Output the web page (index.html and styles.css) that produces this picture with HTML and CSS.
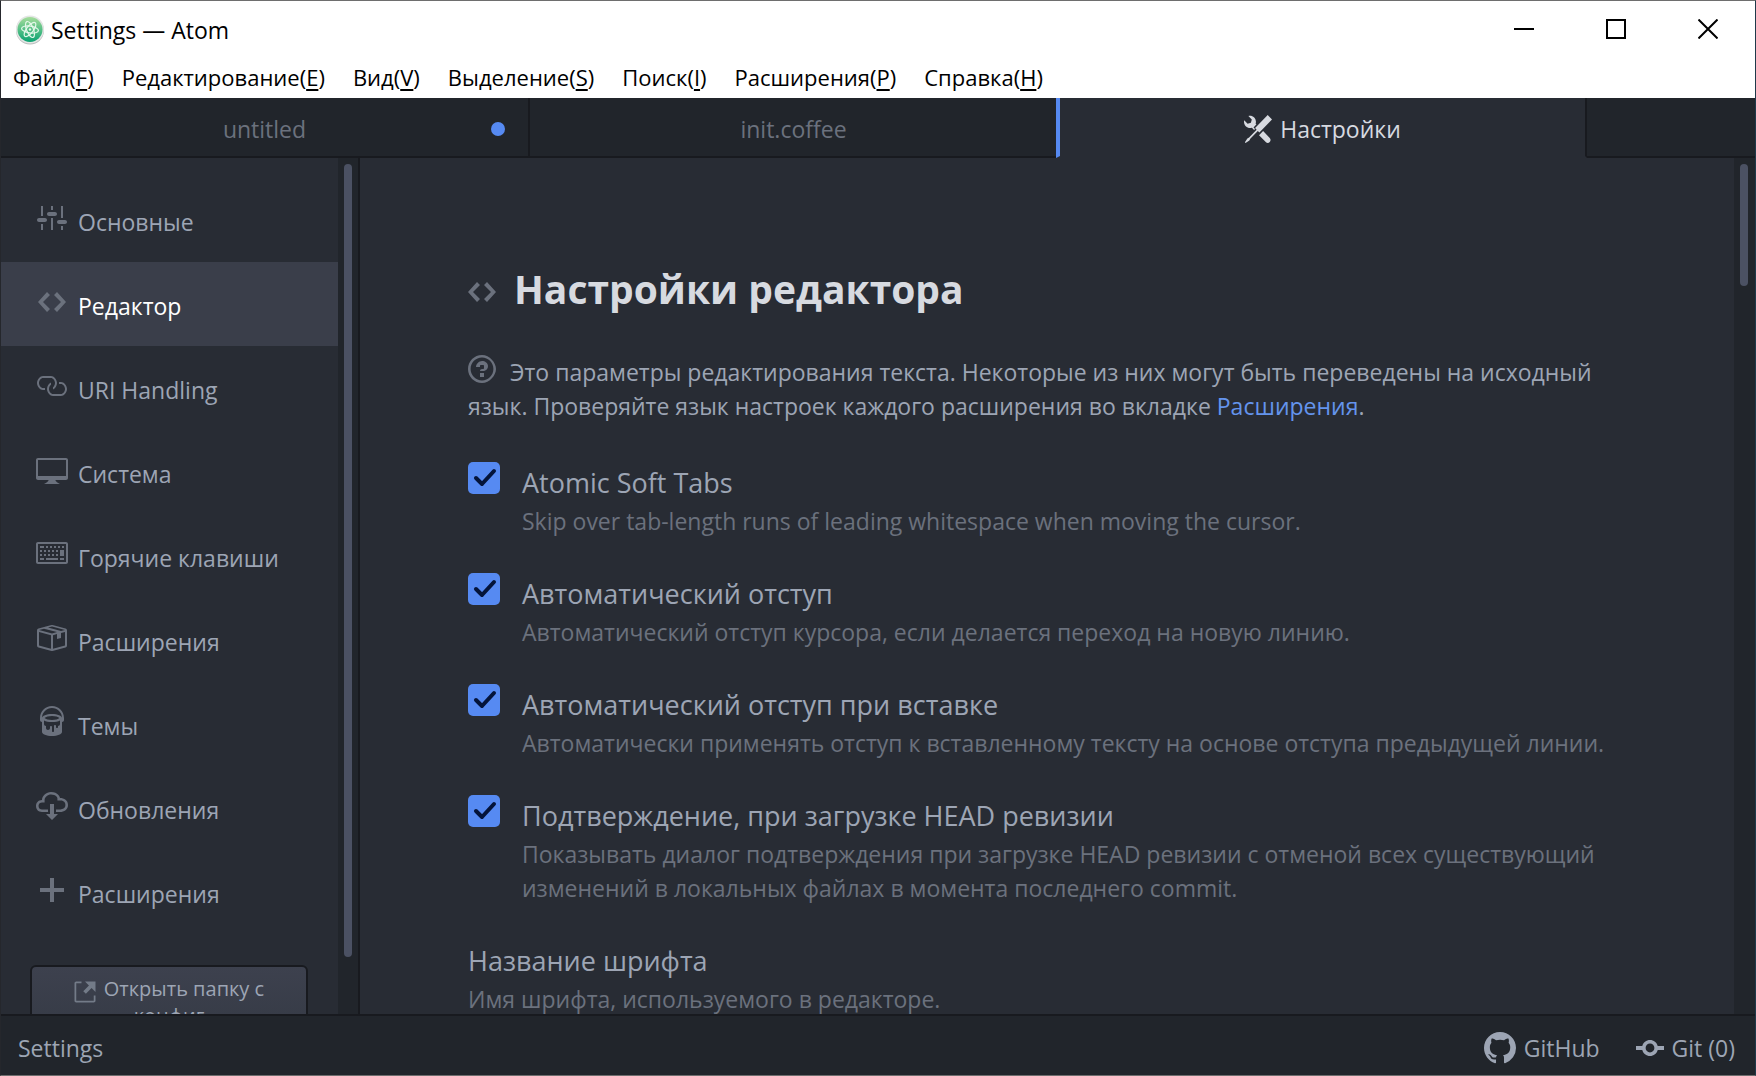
FILE: index.html
```html
<!DOCTYPE html>
<html lang="ru">
<head>
<meta charset="utf-8">
<title>Settings — Atom</title>
<meta name="viewport" content="width=device-width, initial-scale=1">
<link rel="stylesheet" href="styles.css">
</head>
<body>
<div class="window">
  <header class="titlebar">
    <svg class="app-icon" viewBox="0 0 28 30" aria-hidden="true">
      <defs>
        <linearGradient id="atom-green" x1="0" y1="0" x2="0" y2="1">
          <stop offset="0" stop-color="#a5dd9b"/>
          <stop offset="1" stop-color="#0aa372"/>
        </linearGradient>
      </defs>
      <circle cx="14" cy="15.500" r="14" fill="#b9bcbc"/>
      <circle cx="14" cy="14.500" r="14" fill="#e3e6e4"/>
      <circle cx="14" cy="14.500" r="12.500" fill="url(#atom-green)"/>
      <g fill="none" stroke="#e4f8ea" stroke-width="1.200">
        <ellipse cx="14" cy="14.500" rx="8.500" ry="3.400" transform="rotate(8 14 14.500)"/>
        <ellipse cx="14" cy="14.500" rx="8.500" ry="3.400" transform="rotate(68 14 14.500)"/>
        <ellipse cx="14" cy="14.500" rx="8.500" ry="3.400" transform="rotate(128 14 14.500)"/>
      </g>
      <circle cx="14" cy="14.500" r="1.200" fill="#e4f8ea"/>
    </svg>
    <span class="title">Settings — Atom</span>
    <div class="window-controls">
      <button type="button" aria-label="Свернуть"><svg viewBox="0 0 20 20"><path d="M0 10h20" /></svg></button>
      <button type="button" aria-label="Развернуть"><svg viewBox="0 0 20 20"><path d="M1 1h18v18H1z"/></svg></button>
      <button type="button" aria-label="Закрыть"><svg viewBox="0 0 20 20"><path d="M.5.5l19 19M19.500.5l-19 19"/></svg></button>
    </div>
  </header>
  <nav class="menubar">
    <button type="button">Файл(<u>F</u>)</button>
    <button type="button">Редактирование(<u>E</u>)</button>
    <button type="button">Вид(<u>V</u>)</button>
    <button type="button">Выделение(<u>S</u>)</button>
    <button type="button">Поиск(<u>I</u>)</button>
    <button type="button">Расширения(<u>P</u>)</button>
    <button type="button">Справка(<u>H</u>)</button>
  </nav>
  <div class="tabs">
    <button type="button" class="tab">untitled<span class="modified"></span></button>
    <button type="button" class="tab">init.coffee</button>
    <button type="button" class="tab active">
      <svg class="tab-icon" viewBox="0 0 16 16"><path d="M4.480 7.270c.26.26 1.280 1.330 1.280 1.330l.56-.58-.88-.91 1.690-1.800s-.76-.74-.43-.45c.32-1.190.03-2.510-.87-3.440C4.930.5 3.660.2 2.520.51l1.930 2-.51 1.960-1.890.52-1.930-1.990C-.19 4.170.1 5.480 1 6.400c.94.98 2.290 1.260 3.480.87zm6.440 1.940l-2.330 2.300 3.840 3.980c.31.33.73.49 1.140.49.41 0 .82-.16 1.140-.49.63-.65.63-1.700 0-2.350l-3.790-3.930zM16 2.530L13.550 0 6.330 7.460l.88.91-4.310 4.460-.99.53-1.390 2.270.35.37 2.200-1.440.51-1.020L7.900 9.080l.88.91L16 2.530z"/></svg>
      Настройки
    </button>
    <div class="tabs-rest"></div>
  </div>
  <div class="workspace">
    <aside class="sidebar">
      <nav class="sections">
        <a href="#core"><svg viewBox="0.5 0 16 16"><path d="M4 7H3V2h1v5zm-1 7h1v-3H3v3zm5 0h1V8H8v6zm5 0h1v-2h-1v2zm1-12h-1v6h1V2zM9 2H8v2h1V2zM5 8H2c-.55 0-1 .45-1 1s.45 1 1 1h3c.55 0 1-.45 1-1s-.45-1-1-1zm5-3H7c-.55 0-1 .45-1 1s.45 1 1 1h3c.55 0 1-.45 1-1s-.45-1-1-1zm5 4h-3c-.55 0-1 .45-1 1s.45 1 1 1h3c.55 0 1-.45 1-1s-.45-1-1-1z"/></svg>Основные</a>
        <a href="#editor" class="current"><svg viewBox="-1 0 16 16"><path d="M9.500 3L8 4.500 11.500 8 8 11.500 9.500 13 14 8 9.500 3zm-5 0L0 8l4.500 5L6 11.500 2.500 8 6 4.500 4.500 3z"/></svg>Редактор</a>
        <a href="#uri"><svg viewBox="0.5 0 16 16"><path d="M4 9h1v1H4c-1.500 0-3-1.690-3-3.500S2.550 3 4 3h4c1.450 0 3 1.690 3 3.500 0 1.410-.91 2.720-2 3.250V8.590c.58-.45 1-1.270 1-2.090C10 5.220 8.980 4 8 4H4c-.98 0-2 1.220-2 2.500S3 9 4 9zm9-3h-1v1h1c1 0 2 1.220 2 2.500S13.980 12 13 12H9c-.98 0-2-1.220-2-2.500 0-.83.42-1.640 1-2.090V6.250c-1.090.53-2 1.840-2 3.250C6 11.310 7.550 13 9 13h4c1.450 0 3-1.690 3-3.500S14.500 6 13 6z"/></svg>URI Handling</a>
        <a href="#system"><svg viewBox="0 0 16 16"><path d="M15 2H1c-.55 0-1 .45-1 1v9c0 .55.45 1 1 1h5.340c-.25.61-.86 1.390-2.340 2h8c-1.480-.61-2.090-1.390-2.340-2H15c.55 0 1-.45 1-1V3c0-.55-.45-1-1-1zm0 9H1V3h14v8z"/></svg>Система</a>
        <a href="#keys"><svg viewBox="0 0 16 16"><path d="M10 5H9V4h1v1zM3 6H2v1h1V6zm5-2H7v1h1V4zM4 4H2v1h2V4zm8 7h2v-1h-2v1zM8 7h1V6H8v1zm-4 3H2v1h2v-1zm8-6h-1v1h1V4zm2 0h-1v1h1V4zm-2 5h2V6h-2v3zm4-6v9c0 .55-.45 1-1 1H1c-.55 0-1-.45-1-1V3c0-.55.45-1 1-1h14c.55 0 1 .45 1 1zm-1 0H1v9h14V3zM6 7h1V6H6v1zm0-3H5v1h1V4zM4 7h1V6H4v1zm1 4h6v-1H5v1zm5-4h1V6h-1v1zM3 8H2v1h1V8zm5 0v1h1V8H8zM6 8v1h1V8H6zM5 8H4v1h1V8zm5 1h1V8h-1v1z"/></svg>Горячие клавиши</a>
        <a href="#packages"><svg viewBox="0.5 0 16 16"><path d="M1 4.270v7.470c0 .45.3.84.75.97l6.500 1.730c.16.05.34.05.5 0l6.500-1.730c.45-.13.75-.52.75-.97V4.270c0-.45-.3-.84-.75-.97l-6.500-1.740a1.400 1.400 0 0 0-.5 0L1.750 3.300c-.45.13-.75.52-.75.97zm7 9.090l-6-1.590V5l6 1.610v6.750zM2 4l2.500-.67L11 5.060l-2.500.67L2 4zm13 7.770l-6 1.590V6.610l2-.55V8.500l2-.53V5.530L15 5v6.770zm-2-7.240L6.500 2.800l2-.53L15 4l-2 .53z"/></svg>Расширения</a>
        <a href="#themes"><svg viewBox="-2 0 16 16"><path d="M6 0C2.690 0 0 2.690 0 6v1c0 .55.45 1 1 1v5c0 1.100 2.240 2 5 2s5-.9 5-2V8c.55 0 1-.45 1-1V6c0-3.310-2.690-6-6-6zm3 10v.5c0 .28-.22.5-.5.5s-.5-.22-.5-.5V10c0-.28-.22-.5-.5-.5s-.5.22-.5.5v2.500c0 .28-.22.5-.5.5s-.5-.22-.5-.5v-2c0-.28-.22-.5-.5-.5s-.5.22-.5.5v.5c0 .55-.45 1-1 1s-1-.45-1-1v-1c-.55 0-1-.45-1-1V7.200c.91.49 2.360.8 4 .8 1.640 0 3.090-.31 4-.8V9c0 .55-.45 1-1 1zM6 7c-1.680 0-3.120-.41-3.710-1C2.880 5.410 4.320 5 6 5c1.680 0 3.120.41 3.710 1-.59.59-2.030 1-3.710 1zm0-3c-2.760 0-5 .89-5 2 0-2.760 2.240-5 5-5s5 2.240 5 5c0-1.100-2.240-2-5-2z"/></svg>Темы</a>
        <a href="#updates"><svg viewBox="0 0 16 16"><path d="M9 12h2l-3 3-3-3h2V7h2v5zm3-8c0-.44-.91-3-4.500-3C5.080 1 3 2.920 3 5 1.020 5 0 6.520 0 8c0 1.530 1 3 3 3h3V9.700H3C1.380 9.700 1.300 8.280 1.300 8c0-.17.05-1.700 1.700-1.700h1.300V5c0-1.390 1.560-2.700 3.200-2.700 2.550 0 3.130 1.550 3.200 1.800v1.200H12c.81 0 2.700.22 2.700 2.200 0 2.090-2.250 2.200-2.700 2.200h-2V11h2c2.080 0 4-1.160 4-3.500C16 5.060 14.080 4 12 4z"/></svg>Обновления</a>
        <a href="#install"><svg viewBox="-2 0 16 16"><path d="M12 9H7v5H5V9H0V7h5V2h2v5h5v2z"/></svg>Расширения</a>
      </nav>
      <button type="button" class="open-config"><svg viewBox="0 0 12 16"><path d="M11 10h1v3c0 .55-.45 1-1 1H1c-.55 0-1-.45-1-1V3c0-.55.45-1 1-1h3v1H1v10h10v-3zM6 2l2.250 2.250L5 7.500 6.500 9l3.250-3.250L12 8V2H6z"/></svg>Открыть папку с конфиг</button>
    </aside>
    <div class="scrollbar side"><div class="thumb long"></div></div>
    <main class="panel">
      <h1><svg viewBox="0 0 14 16"><path d="M9.500 3L8 4.500 11.500 8 8 11.500 9.500 13 14 8 9.500 3zm-5 0L0 8l4.500 5L6 11.500 2.500 8 6 4.500 4.500 3z"/></svg>Настройки редактора</h1>
      <p class="intro"><svg viewBox="0 0 14 16"><path d="M6 10h2v2H6v-2zm4-3.500C10 8.640 8 9 8 9H6c0-.55.45-1 1-1h.5c.28 0 .5-.22.5-.5v-1c0-.28-.22-.5-.5-.5h-1c-.28 0-.5.22-.5.5V7H4c0-1.500 1.500-3 3-3s3 1 3 2.500zM7 2.300c3.140 0 5.700 2.560 5.700 5.700s-2.560 5.700-5.700 5.700A5.710 5.710 0 0 1 1.300 8c0-3.140 2.560-5.700 5.700-5.700zM7 1C3.140 1 0 4.140 0 8s3.140 7 7 7 7-3.860 7-7-3.140-7-7-7z"/></svg>Это параметры редактирования текста. Некоторые из них могут быть переведены на исходный язык. Проверяйте язык настроек каждого расширения во вкладке <a href="#packages">Расширения</a>.</p>
      <div class="setting">
        <span class="check"><input type="checkbox" id="soft-tabs" checked><svg viewBox="0 0 32 32"><path d="M8 16l6 6L26 9"/></svg></span>
        <div><label for="soft-tabs">Atomic Soft Tabs</label><p>Skip over tab-length runs of leading whitespace when moving the cursor.</p></div>
      </div>
      <div class="setting">
        <span class="check"><input type="checkbox" id="auto-indent" checked><svg viewBox="0 0 32 32"><path d="M8 16l6 6L26 9"/></svg></span>
        <div><label for="auto-indent">Автоматический отступ</label><p>Автоматический отступ курсора, если делается переход на новую линию.</p></div>
      </div>
      <div class="setting">
        <span class="check"><input type="checkbox" id="paste-indent" checked><svg viewBox="0 0 32 32"><path d="M8 16l6 6L26 9"/></svg></span>
        <div><label for="paste-indent">Автоматический отступ при вставке</label><p>Автоматически применять отступ к вставленному тексту на основе отступа предыдущей линии.</p></div>
      </div>
      <div class="setting">
        <span class="check"><input type="checkbox" id="confirm-head" checked><svg viewBox="0 0 32 32"><path d="M8 16l6 6L26 9"/></svg></span>
        <div><label for="confirm-head">Подтверждение, при загрузке HEAD ревизии</label><p>Показывать диалог подтверждения при загрузке HEAD ревизии с отменой всех существующий изменений в локальных файлах в момента последнего commit.</p></div>
      </div>
      <div class="setting">
        <div><label for="font-family">Название шрифта</label><p>Имя шрифта, используемого в редакторе.</p><input type="text" id="font-family" class="text-field"></div>
      </div>
    </main>
    <div class="scrollbar"><div class="thumb short"></div></div>
  </div>
  <footer class="statusbar">
    <span>Settings</span>
    <div class="status-right">
      <button type="button"><svg class="github" viewBox="0 0 16 16"><path d="M8 0C3.580 0 0 3.580 0 8c0 3.540 2.290 6.530 5.470 7.590.4.07.55-.17.55-.38 0-.19-.01-.82-.01-1.490-2.010.37-2.530-.49-2.690-.94-.09-.23-.48-.94-.82-1.130-.28-.15-.68-.52-.01-.53.63-.01 1.080.58 1.230.82.72 1.210 1.870.87 2.330.66.07-.52.28-.87.51-1.070-1.780-.2-3.640-.89-3.640-3.950 0-.87.31-1.590.82-2.150-.08-.2-.36-1.020.08-2.120 0 0 .67-.21 2.200.82.64-.18 1.320-.27 2-.27.68 0 1.360.09 2 .27 1.530-1.040 2.200-.82 2.200-.82.44 1.100.16 1.920.08 2.120.51.56.82 1.270.82 2.150 0 3.070-1.870 3.750-3.650 3.950.29.25.54.73.54 1.480 0 1.070-.01 1.930-.01 2.200 0 .21.15.46.55.38A8.013 8.013 0 0 0 16 8c0-4.420-3.580-8-8-8z"/></svg>GitHub</button>
      <button type="button"><svg class="commit" viewBox="0 0 14 16"><path d="M10.860 7c-.45-1.720-2-3-3.860-3-1.860 0-3.410 1.280-3.860 3H0v2h3.140c.45 1.720 2 3 3.860 3 1.860 0 3.410-1.280 3.860-3H14V7h-3.140zM7 10.200c-1.220 0-2.200-.98-2.200-2.200 0-1.220.98-2.200 2.200-2.200 1.220 0 2.200.98 2.200 2.200 0 1.220-.98 2.200-2.200 2.200z"/></svg>Git (0)</button>
    </div>
  </footer>
</div>
</body>
</html>
```

FILE: styles.css
```css
:root {
  --base: #282c34;
  --dark: #21252b;
  --line: #181a1f;
  --text: #9da5b4;
  --subtle: #6b717d;
  --bright: #d7dae0;
  --accent: #568af2;
}

* {
  box-sizing: border-box;
}

body {
  margin: 0;
  font-family: "Open Sans", "Noto Sans", sans-serif;
  font-size: 23px;
  color: var(--text);
  background: var(--dark);
}

button {
  margin: 0;
  padding: 0;
  border: 0;
  background: none;
  color: inherit;
  font: inherit;
}

svg {
  display: block;
  flex: none;
  fill: currentColor;
}

.window {
  display: flex;
  flex-direction: column;
  height: 100vh;
  border: 1px solid #6e6e6e;
  border-right-color: #1f3a4a;
  border-left-color: #25272c;
  overflow: hidden;
}

.titlebar {
  display: flex;
  align-items: center;
  height: 57px;
  padding: 0 1px 0 15px;
  background: #fff;
  color: #000;
}

.app-icon {
  width: 28px;
  height: 30px;
}

.title {
  flex: 1;
  padding-left: 7px;
}

.window-controls {
  display: flex;
  align-self: flex-start;
}

.window-controls button {
  display: grid;
  place-items: center;
  width: 92px;
  height: 56px;
}

.window-controls svg {
  width: 20px;
  height: 20px;
  fill: none;
  stroke: #000;
  stroke-width: 2;
}

.menubar {
  display: flex;
  gap: 28px;
  height: 40px;
  padding: 0 12px 2px;
  background: #fff;
  color: #000;
  font-size: 22px;
}

.menubar u {
  text-underline-offset: 3px;
}

.tabs {
  display: flex;
  flex: none;
  height: 60px;
  background: var(--dark);
}

.tab {
  position: relative;
  display: flex;
  flex: 0 1 529px;
  align-items: center;
  justify-content: center;
  gap: 8px;
  padding-top: 4px;
  border-right: 2px solid var(--line);
  border-bottom: 2px solid var(--line);
  color: var(--subtle);
}

.tab.active {
  flex-basis: 531px;
  margin-left: -3px;
  border-bottom-color: var(--base);
  border-left: 4px solid var(--accent);
  background: var(--base);
  color: var(--bright);
}

.tab-icon {
  width: 28px;
  height: 28px;
}

.modified {
  position: absolute;
  right: 23px;
  width: 14px;
  height: 14px;
  border-radius: 50%;
  background: var(--accent);
}

.tabs-rest {
  flex: 1;
  border-bottom: 2px solid var(--line);
}

.workspace {
  display: flex;
  flex: 1;
  min-height: 0;
  background: var(--base);
}

.sidebar {
  display: flex;
  flex: none;
  flex-direction: column;
  gap: 31px;
  width: 337px;
  padding-top: 20px;
  overflow: hidden;
}

.sections a {
  display: flex;
  align-items: center;
  gap: 10px;
  height: 84px;
  padding: 4px 0 0 35px;
  color: var(--text);
  text-decoration: none;
}

.sections svg {
  width: 32px;
  height: 32px;
  margin-bottom: 8px;
  color: var(--subtle);
}

.sections .current {
  background: #3a3e4a;
  color: #fff;
}

.open-config {
  flex: none;
  margin: 0 30px 0 29px;
  padding: 8px 32px;
  border: 2px solid var(--line);
  border-radius: 6px;
  background: linear-gradient(#3d414e, #353a45);
  font-size: 20px;
  line-height: 27px;
}

.open-config svg {
  display: inline-block;
  width: 22px;
  height: 28px;
  margin: -5px 8px -5px 0;
  vertical-align: -5px;
  color: #737b88;
}

.scrollbar {
  flex: none;
  width: 21px;
  padding: 6px;
  background: var(--dark);
}

.scrollbar.side {
  width: 22px;
  border-right: 2px solid var(--line);
}

.thumb {
  width: 8px;
  border-radius: 4px;
  background: #4b5163;
}

.thumb.long {
  height: 94%;
}

.thumb.short {
  height: 122px;
}

.panel {
  flex: 1;
  min-width: 0;
  padding: 101px 108px 0;
  overflow: hidden;
}

.panel h1 {
  display: flex;
  align-items: center;
  gap: 18px;
  margin: 0 0 36px;
  color: var(--bright);
  font-size: 39px;
  line-height: 60px;
}

.panel h1 svg {
  width: 28px;
  height: 32px;
  margin-top: 6px;
  color: var(--subtle);
}

.intro {
  margin: 0 0 39px;
  line-height: 34px;
}

.intro svg {
  display: inline-block;
  width: 28px;
  height: 32px;
  margin: -4px 14px 0 0;
  vertical-align: -4px;
  color: var(--subtle);
}

.intro a {
  color: #6494ed;
  text-decoration: none;
}

.setting {
  display: flex;
  gap: 22px;
  margin-bottom: 35px;
}

.setting label {
  display: block;
  font-size: 27px;
  line-height: 42px;
}

.setting p {
  margin: 0;
  color: var(--subtle);
  line-height: 34px;
}

.check {
  display: grid;
  flex: none;
  width: 32px;
  height: 32px;
}

.check input,
.check svg {
  grid-area: 1 / 1;
  width: 32px;
  height: 32px;
  margin: 0;
}

.check input {
  appearance: none;
  border-radius: 5px;
  background: var(--accent);
}

.check svg {
  fill: none;
  stroke: #04143a;
  stroke-width: 4;
  stroke-linecap: round;
  stroke-linejoin: round;
  pointer-events: none;
}

.text-field {
  width: 100%;
  height: 56px;
  margin-top: 16px;
  border: 2px solid var(--line);
  border-radius: 6px;
  background: #1b1d23;
  color: var(--bright);
  font: inherit;
}

.statusbar {
  display: flex;
  flex: none;
  align-items: center;
  justify-content: space-between;
  height: 61px;
  padding: 4px 20px 0 17px;
  border-top: 2px solid var(--line);
  background: var(--dark);
}

.status-right,
.status-right button {
  display: flex;
  align-items: center;
}

.status-right {
  gap: 36px;
}

.status-right button {
  gap: 8px;
}

.github {
  width: 32px;
  height: 32px;
}

.commit {
  width: 28px;
  height: 32px;
}
```
